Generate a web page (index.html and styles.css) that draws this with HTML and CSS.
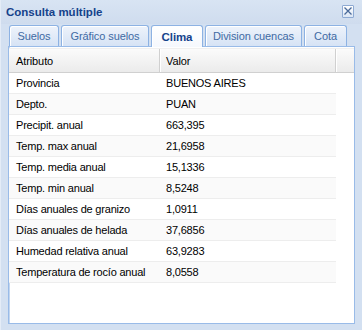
FILE: index.html
```html
<!DOCTYPE html>
<html>
<head>
<meta charset="utf-8">
<link rel="stylesheet" href="styles.css">
</head>
<body>
<div class="win">
  <div class="win-head">
    <span class="win-title">Consulta múltiple</span>
    <span class="win-close">
      <svg width="10" height="10" viewBox="0 0 10 10"><path d="M1.5 1.5 L8.5 8.5 M8.5 1.5 L1.5 8.5" stroke="#4a6a9a" stroke-width="1.3" fill="none"/></svg>
    </span>
  </div>
  <div class="tabs">
    <div class="tab t-suelos">Suelos</div>
    <div class="tab t-grafico">Gráfico suelos</div>
    <div class="tab t-clima active">Clima</div>
    <div class="tab t-division">Division cuencas</div>
    <div class="tab t-cota">Cota</div>
  </div>
  <div class="panel">
    <div class="grid-head">
      <div class="hcell c1">Atributo</div>
      <div class="hcell c2">Valor</div>
      <div class="hcell c3"></div>
    </div>
    <div class="rows">
      <div class="row"><div class="cell c1">Provincia</div><div class="cell c2">BUENOS AIRES</div></div>
      <div class="row alt"><div class="cell c1">Depto.</div><div class="cell c2">PUAN</div></div>
      <div class="row"><div class="cell c1">Precipit. anual</div><div class="cell c2">663,395</div></div>
      <div class="row alt"><div class="cell c1">Temp. max anual</div><div class="cell c2">21,6958</div></div>
      <div class="row"><div class="cell c1">Temp. media anual</div><div class="cell c2">15,1336</div></div>
      <div class="row alt"><div class="cell c1">Temp. min anual</div><div class="cell c2">8,5248</div></div>
      <div class="row"><div class="cell c1">Días anuales de granizo</div><div class="cell c2">1,0911</div></div>
      <div class="row alt"><div class="cell c1">Días anuales de helada</div><div class="cell c2">37,6856</div></div>
      <div class="row"><div class="cell c1">Humedad relativa anual</div><div class="cell c2">63,9283</div></div>
      <div class="row alt"><div class="cell c1">Temperatura de rocío anual</div><div class="cell c2">8,0558</div></div>
    </div>
  </div>
</div>
</body>
</html>
```

FILE: styles.css
```css
html, body {
  margin: 0;
  padding: 0;
}
body {
  width: 362px;
  height: 330px;
  overflow: hidden;
  font-family: "Liberation Sans", Arial, sans-serif;
  font-size: 11px;
  color: #000;
}
.win {
  width: 362px;
  height: 330px;
  box-sizing: border-box;
  background: #d3e0f1;
  border-left: 1px solid #e4ecf7;
  display: flex;
  flex-direction: column;
}
.win-head {
  height: 24px;
  flex-shrink: 0;
  display: flex;
  align-items: center;
  justify-content: space-between;
  padding: 0 8px 0 5px;
  background: linear-gradient(#d8e4f3, #cfdcee);
}
.win-title {
  font-weight: bold;
  font-size: 11.5px;
  color: #15428b;
}
.win-close {
  width: 10px;
  height: 11px;
  border: 1px solid #8eaad3;
  background: linear-gradient(#ffffff, #dbe6f5);
  display: flex;
  align-items: center;
  justify-content: center;
  border-radius: 1px;
  position: relative;
  top: -1px;
}
.tabs {
  display: flex;
  gap: 2px;
  padding-left: 8px;
  height: 22px;
  flex-shrink: 0;
  align-items: flex-end;
}
.tab {
  height: 21px;
  flex-shrink: 0;
  box-sizing: border-box;
  border: 1px solid #8db2e3;
  border-bottom: none;
  border-radius: 3px 3px 0 0;
  background: linear-gradient(#eef3fb, #d6e3f5);
  color: #416aa3;
  display: flex;
  align-items: center;
  justify-content: center;
  font-size: 11px;
  letter-spacing: -0.1px;
  white-space: nowrap;
  box-shadow: inset 1px 1px 0 #ffffff;
}
.t-suelos { width: 50px; }
.t-grafico { width: 88px; }
.t-clima { width: 52px; }
.t-division { width: 97px; }
.t-cota { width: 43px; }
.tab.active {
  height: 22px;
  background: linear-gradient(#ffffff, #f5f8fd);
  color: #15428b;
  font-weight: bold;
  font-size: 11.5px;
  margin-bottom: -1px;
  position: relative;
  z-index: 1;
}
.panel {
  margin: 0 7px 6px 7px;
  flex: 1;
  box-sizing: border-box;
  border: 1px solid #99bbe8;
  background: #fff;
  padding-top: 1px;
  box-shadow: inset 1px 0 0 #c3d6ef;
}
.grid-head {
  display: flex;
  height: 25px;
  box-sizing: border-box;
  background: linear-gradient(#fbfbfb, #ebebeb);
  border-bottom: 1px solid #d0d0d0;
  border-top: 1px solid #f0f0f0;
}
.hcell {
  display: flex;
  align-items: center;
  box-sizing: border-box;
  border-right: 1px solid #d0d0d0;
  box-shadow: 1px 0 0 #ffffff;
  padding-left: 7px;
  font-size: 11px;
  letter-spacing: -0.1px;
}
.c1 { width: 151px; }
.c2 { width: 176px; padding-left: 6px; }
.c3 { flex: 1; border-right: none; box-shadow: none; }
.rows {
  width: 327px;
}
.row {
  display: flex;
  height: 21px;
  box-sizing: border-box;
  border-bottom: 1px solid #ededed;
  background: #fff;
}
.row.alt {
  background: #fafafa;
}
.cell {
  display: flex;
  align-items: center;
  padding-left: 7px;
  box-sizing: border-box;
  font-size: 11px;
  letter-spacing: -0.2px;
  white-space: nowrap;
}
.cell.c2 { padding-left: 6px; }
```
